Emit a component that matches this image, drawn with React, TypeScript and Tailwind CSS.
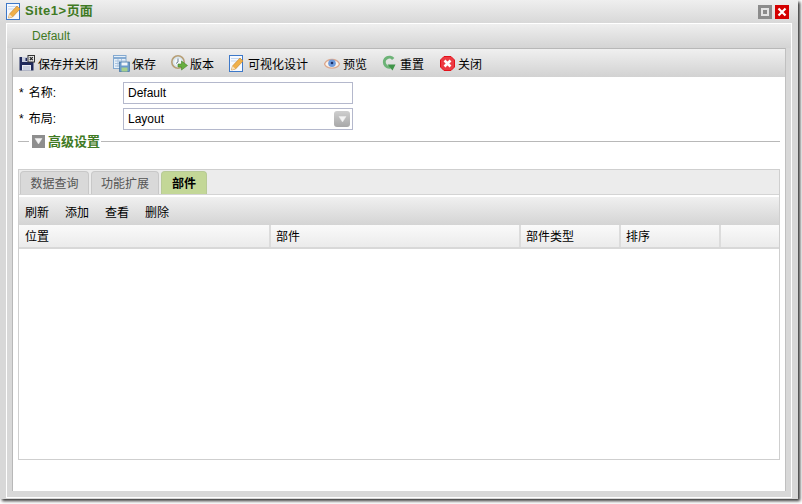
const FONT = "[font-family:'Liberation_Sans','Noto_Sans_CJK_SC',sans-serif]";

function NoteIcon() {
  return (
    <svg width="16" height="17" viewBox="0 0 16 17" className="shrink-0">
      <rect x="0.5" y="0.5" width="13" height="16" fill="#f6f9fe" stroke="#3d78c8" />
      <path d="M2 3.5h9M2 6h6" stroke="#c5d7ef" />
      <path d="M2.5 15l1-4 7.5-8 3 3-7.5 8z" fill="#f0b04a" stroke="#c78a35" strokeWidth="0.7" />
      <path d="M2.5 15l1-4 3 3z" fill="#f6e0bd" />
    </svg>
  );
}

function SaveCloseIcon() {
  return (
    <svg width="16" height="16" viewBox="0 0 16 16" className="shrink-0">
      <rect x="0.5" y="2" width="14" height="13.5" fill="#1f2a5c" />
      <rect x="3" y="2" width="6.5" height="5" fill="#c9cede" />
      <rect x="6.5" y="3" width="1.5" height="3" fill="#1f2a5c" />
      <rect x="3" y="10" width="9" height="5.5" fill="#e9ebf2" />
      <path d="M4 12h7M4 14h7" stroke="#9aa3c0" strokeWidth="0.7" />
      <rect x="9" y="0.5" width="6.5" height="6.5" fill="#e8e8e8" stroke="#333" />
      <path d="M10.8 2.2l3 3M13.8 2.2l-3 3" stroke="#222" strokeWidth="1.2" />
    </svg>
  );
}

function SaveIcon() {
  return (
    <svg width="17" height="17" viewBox="0 0 17 17" className="shrink-0">
      <rect x="0.5" y="0.5" width="12.5" height="13" fill="#e6f0f8" stroke="#84a9d0" />
      <path d="M1 3h12" stroke="#6f9bc9" strokeWidth="1.6" />
      <path d="M2 6h10M2 8.5h5M2 11h4M5 4v8M8.5 4v3" stroke="#a9c3e0" />
      <rect x="6.5" y="7" width="10" height="9.5" fill="#6b9bcb" stroke="#41719f" strokeWidth="0.7" />
      <rect x="8.5" y="7.5" width="6" height="3" fill="#f2f6fa" />
      <rect x="8.5" y="12.5" width="6" height="4" fill="#a6d08c" />
    </svg>
  );
}

function VersionIcon() {
  return (
    <svg width="17" height="16" viewBox="0 0 17 16" className="shrink-0">
      <circle cx="7" cy="7" r="6.2" fill="#d9e6ee" stroke="#b79f76" strokeWidth="1.6" />
      <circle cx="7" cy="7" r="3.6" fill="#f5f8fa" />
      <path d="M7 3.5v3.5l-2 1.5" fill="none" stroke="#6d7f91" />
      <path d="M7 9h3.5V6l6 4.5-6 4.5v-3H7z" fill="#67ae3f" stroke="#46832c" strokeWidth="0.6" />
    </svg>
  );
}

function EyeIcon() {
  return (
    <svg width="16" height="13" viewBox="0 0 16 13" className="shrink-0">
      <path d="M0.5 7C3 1 13 1 15.5 7 13 12.5 3 12.5 0.5 7z" fill="#faf3ec" stroke="#dca98f" strokeWidth="1.3" />
      <circle cx="8" cy="6.2" r="3.8" fill="#6f9bdc" />
      <circle cx="8" cy="6" r="1.3" fill="#1c2f66" />
    </svg>
  );
}

function ResetIcon() {
  return (
    <svg width="14" height="16" viewBox="0 0 14 16" className="shrink-0">
      <path d="M11.2 4A5 5 0 1 0 8.5 12" fill="none" stroke="#6db377" strokeWidth="3" />
      <path d="M5.5 9.5h8l-3 6z" fill="#3f9448" />
    </svg>
  );
}

function CloseIcon() {
  return (
    <svg width="15" height="15" viewBox="0 0 15 15" className="shrink-0">
      <path d="M4 0.5h7l3.5 3.5v7l-3.5 3.5H4L0.5 11V4z" fill="#ec3a42" stroke="#e3101a" />
      <path d="M4.5 4.5l6 6M10.5 4.5l-6 6" stroke="#fff" strokeWidth="2.6" />
    </svg>
  );
}

function DownBox({ size }: { size: "sm" | "md" }) {
  const box = size === "md" ? "h-[16px] w-[16px] rounded-[3px] bg-gradient-to-b from-[#cfcfcf] to-[#a8a8a8]" : "h-[13px] w-[13px] bg-[#8e8e8e]";
  return (
    <span className={`flex shrink-0 items-center justify-center ${box}`}>
      <svg width="9" height="8" viewBox="0 0 9 8">
        <path d="M1 1.5h7L4.5 7z" fill="#f4f4f4" stroke="#efefef" strokeWidth="0.5" />
      </svg>
    </span>
  );
}

const TOOLBAR = [
  { icon: <SaveCloseIcon />, label: "保存并关闭", width: "w-[94px]" },
  { icon: <SaveIcon />, label: "保存", width: "w-[58px]" },
  { icon: <VersionIcon />, label: "版本", width: "w-[58px]" },
  { icon: <NoteIcon />, label: "可视化设计", width: "w-[95px]" },
  { icon: <EyeIcon />, label: "预览", width: "w-[57px]" },
  { icon: <ResetIcon />, label: "重置", width: "w-[58px]" },
  { icon: <CloseIcon />, label: "关闭", width: "w-[50px]" },
];

const COLUMNS = [
  { label: "位置", width: "w-[252px] pl-[6px]" },
  { label: "部件", width: "w-[250px] pl-[5px]" },
  { label: "部件类型", width: "w-[100px] pl-[5px]" },
  { label: "排序", width: "w-[100px] pl-[5px]" },
];

export default function App() {
  return (
    <div className={`h-[504px] w-[802px] bg-white text-[12px] leading-none text-black ${FONT}`}>
      <div className="flex h-[499px] w-[798px] flex-col bg-[#d8d8d8] shadow-[2px_2px_3px_#333]">
        <div className="flex h-[23px] shrink-0 items-center bg-gradient-to-b from-[#efefef] to-[#d8d8d8] pl-[6px] pr-[9px]">
          <NoteIcon />
          <span className="mb-[2px] ml-[3px] text-[13px] font-bold text-[#3f7a24]">
            <span className="tracking-[0.5px]">Site1&gt;</span>页面
          </span>
          <span className="ml-auto flex items-center gap-[3px]">
            <span className="flex h-[14px] w-[14px] items-center justify-center bg-[#8c8c8c]">
              <span className="h-[8px] w-[8px] border-2 border-[#e4e4e4]" />
            </span>
            <span className="flex h-[14px] w-[14px] items-center justify-center bg-[#d40000]">
              <svg width="10" height="10" viewBox="0 0 10 10">
                <path d="M1.5 1.5l7 7M8.5 1.5l-7 7" stroke="#fff" strokeWidth="2.2" />
              </svg>
            </span>
          </span>
        </div>

        <div className="mx-[6px] mb-[1px] flex min-h-0 flex-1 flex-col border border-white">
          <div className="flex h-[24px] shrink-0 items-center bg-gradient-to-b from-[#efefef] to-[#d4d4d4] pl-[25px] text-[#3f7a24]">
            Default
          </div>
          <div className="mx-[5px] mb-[6px] flex min-h-0 flex-1 flex-col border border-b-0 border-[#b8b8b8] border-r-[#c0c0c0] bg-white">
            <div className="flex h-[28px] shrink-0 items-center bg-gradient-to-b from-[#f0f0f0] to-[#d2d2d2] pl-[5px]">
              {TOOLBAR.map((item) => (
                <div key={item.label} className={`flex items-center gap-[2px] ${item.width}`}>
                  <span className="flex w-[18px] justify-center">{item.icon}</span>
                  <span className="pt-[3px]">{item.label}</span>
                </div>
              ))}
            </div>

            <div className="flex min-h-0 flex-1 flex-col px-[5px] pt-[5px]">
              <div className="flex h-[22px] items-center">
                <span className="flex w-[105px] pl-[1px]">*<span className="ml-[5px]">名称:</span></span>
                <div className="flex h-[22px] w-[230px] items-center border border-[#b4b8cc] pl-[4px]">Default</div>
              </div>
              <div className="mt-[4px] flex h-[22px] items-center">
                <span className="flex w-[105px] pl-[1px]">*<span className="ml-[5px]">布局:</span></span>
                <div className="flex h-[22px] w-[230px] items-center justify-between border border-[#b4b8cc] pl-[4px] pr-[2px]">
                  Layout
                  <DownBox size="md" />
                </div>
              </div>
              <div className="mt-[4px] flex h-[14px] items-center">
                <span className="h-px w-[11px] bg-[#b8b8b8]" />
                <span className="ml-[3px]"><DownBox size="sm" /></span>
                <span className="ml-[3px] mr-[1px] text-[13px] font-bold text-[#3f7a24]">高级设置</span>
                <span className="h-px flex-1 bg-[#b8b8b8]" />
              </div>

              <div className="mt-[21px] mb-[31px] flex min-h-0 flex-1 flex-col border border-[#cfcfcf]">
                <div className="flex h-[25px] shrink-0 items-end gap-[2px] border-b border-[#d4d4d4] bg-[#ececec] pl-[1px]">
                  <div className="flex h-[23px] w-[69px] items-center justify-center rounded-t-[4px] border border-b-0 border-[#c8c8c8] bg-[#d9d9d9] pt-[2px] text-[#555]">数据查询</div>
                  <div className="flex h-[23px] w-[68px] items-center justify-center rounded-t-[4px] border border-b-0 border-[#c8c8c8] bg-[#d9d9d9] pt-[2px] text-[#555]">功能扩展</div>
                  <div className="flex h-[23px] w-[46px] items-center justify-center rounded-t-[4px] border border-b-0 border-[#b8ca96] bg-[#c3d797] pt-[2px] font-bold">部件</div>
                </div>
                <div className="flex h-[30px] shrink-0 items-center gap-[16px] border-t-2 border-white bg-gradient-to-b from-[#f0f0f0] to-[#d4d4d4] pl-[6px] pt-[3px]">
                  <span>刷新</span>
                  <span>添加</span>
                  <span>查看</span>
                  <span>删除</span>
                </div>
                <div className="flex h-[24px] shrink-0 border-b-2 border-[#d8d8d8] bg-gradient-to-b from-[#fafafa] to-[#ebebeb]">
                  {COLUMNS.map((column) => (
                    <div key={column.label} className={`flex items-center border-r-2 border-[#dcdcdc] pt-[2px] ${column.width}`}>
                      {column.label}
                    </div>
                  ))}
                </div>
                <div className="flex-1 bg-white" />
              </div>
            </div>
          </div>
        </div>
      </div>
    </div>
  );
}
